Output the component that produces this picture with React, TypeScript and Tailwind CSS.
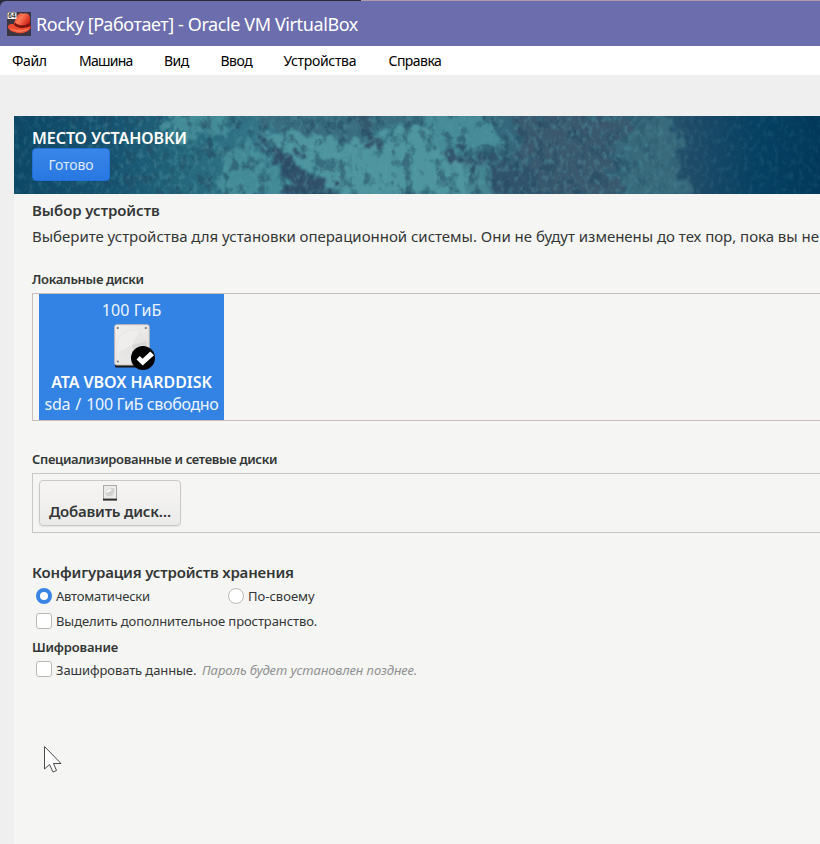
import React from "react";

const menu = [
  { label: "Файл", cls: "w-[67px] tracking-[-0.4px]" },
  { label: "Машина", cls: "w-[85px] tracking-[-0.75px]" },
  { label: "Вид", cls: "w-[56.5px] tracking-[-0.5px]" },
  { label: "Ввод", cls: "w-[63px] tracking-[-0.5px]" },
  { label: "Устройства", cls: "w-[105px] tracking-[-0.32px]" },
  { label: "Справка", cls: "tracking-[-0.55px]" },
];

function AppIcon() {
  return (
    <svg width="24" height="24" viewBox="0 0 24 24" className="shrink-0">
      <defs>
        <linearGradient id="hat" x1="0" y1="0" x2="1" y2="0.6">
          <stop offset="0" stopColor="#e02a20" />
          <stop offset="0.45" stopColor="#ff7a55" />
          <stop offset="1" stopColor="#c9160f" />
        </linearGradient>
      </defs>
      <rect width="24" height="24" fill="#3b3540" />
      <path d="M6 14C8.500 9 9 2.500 13 1.500C15 1 16 2 18 1.500C21 1 22.800 3 23 6C23.300 9 22.500 12 23.500 14.500V17H8Z" fill="url(#hat)" />
      <path d="M8 10.500C11 14 18 14.500 23 10.500L23.300 14C17 17.500 10 16.500 6.500 13.500Z" fill="#7c1410" />
      <path d="M1 14.500C1.500 12 5 11.500 7 12.500C8.500 16 17 17.500 23.500 14C24 19 17 22 10.500 21C5 20 1 18 1 14.500Z" fill="#f04a30" />
      <path d="M2 15.500C6 18.500 14 19.500 22 16.500C19 19.500 13 20.200 9 19.200C5.500 18.500 3 17.500 2 15.500Z" fill="#ff8a66" />
      <rect x="0.500" y="0.500" width="9" height="6.500" fill="#f5f5f5" />
      <text x="1.300" y="6.100" fontSize="6.500" fontWeight="700" fontFamily="Liberation Sans, sans-serif" fill="#333">64</text>
    </svg>
  );
}

function BannerTexture() {
  return (
    <svg width="806" height="78" viewBox="0 0 806 78" className="absolute inset-0" preserveAspectRatio="none">
      <defs>
        <linearGradient id="sea" x1="0" y1="0" x2="1" y2="0">
          <stop offset="0" stopColor="#0c4766" />
          <stop offset="0.120" stopColor="#155270" />
          <stop offset="0.200" stopColor="#23657b" />
          <stop offset="0.320" stopColor="#37778a" />
          <stop offset="0.520" stopColor="#387383" />
          <stop offset="0.640" stopColor="#35647a" />
          <stop offset="0.780" stopColor="#305e74" />
          <stop offset="0.840" stopColor="#1f4b68" />
          <stop offset="0.920" stopColor="#064062" />
          <stop offset="1" stopColor="#02395b" />
        </linearGradient>
        <linearGradient id="fade" x1="0" y1="0" x2="1" y2="0">
          <stop offset="0" stopColor="#fff" stopOpacity="0.250" />
          <stop offset="0.200" stopColor="#fff" stopOpacity="0.800" />
          <stop offset="0.740" stopColor="#fff" stopOpacity="0.800" />
          <stop offset="0.850" stopColor="#fff" stopOpacity="0.150" />
          <stop offset="1" stopColor="#fff" stopOpacity="0" />
        </linearGradient>
        <mask id="mid"><rect width="806" height="78" fill="url(#fade)" /></mask>
        <filter id="rough" x="-10%" y="-30%" width="120%" height="160%" colorInterpolationFilters="sRGB">
          <feTurbulence type="fractalNoise" baseFrequency="0.090" numOctaves="5" seed="8" result="n" />
          <feDisplacementMap in="SourceGraphic" in2="n" scale="36" xChannelSelector="R" yChannelSelector="G" />
          <feGaussianBlur stdDeviation="1" />
        </filter>
        <filter id="dark" x="0" y="0" width="100%" height="100%" colorInterpolationFilters="sRGB">
          <feTurbulence type="fractalNoise" baseFrequency="0.090 0.070" numOctaves="6" seed="23" />
          <feColorMatrix values="0 0 0 0 0.140  0 0 0 0 0.290  0 0 0 0 0.380  5 0 0 0 -2.500" />
        </filter>
        <filter id="light" x="0" y="0" width="100%" height="100%" colorInterpolationFilters="sRGB">
          <feTurbulence type="fractalNoise" baseFrequency="0.200 0.140" numOctaves="4" seed="4" />
          <feColorMatrix values="0 0 0 0 0.340  0 0 0 0 0.620  0 0 0 0 0.660  0 3 0 0 -1.400" />
        </filter>
      </defs>
      <rect width="806" height="78" fill="url(#sea)" />
      <g filter="url(#rough)">
        <path d="M155 -8H225L210 20L188 12L170 32L150 10Z" fill="#438b97" />
        <path d="M200 80L210 35L235 22L250 40L285 80Z" fill="#438b97" />
        <path d="M245 22L290 12L370 22L400 5L425 28L480 80H325L298 52Z" fill="#4e959f" />
        <path d="M230 -8H410L370 15L330 30L300 14L262 14Z" fill="#396d7f" />
        <path d="M243 23L275 38L300 60L325 66L322 85H255L282 72L262 45Z" fill="#31506a" />
        <path d="M340 -8H356L368 35L358 34Z" fill="#34576d" />
        <path d="M405 -8H470L492 30L455 38L420 26Z" fill="#468b97" />
        <path d="M430 36L500 45L530 65L560 82H480L475 56L432 44Z" fill="#31526b" />
        <path d="M445 48L468 46L480 80H458Z" fill="#458491" />
        <path d="M500 -5H560L620 5L595 35L605 85H540L505 40Z" fill="#3a596f" />
        <path d="M605 20L640 -8L670 25L660 55L690 85H610Z" fill="#386a7c" />
      </g>
      <g mask="url(#mid)">
        <rect width="806" height="78" filter="url(#dark)" opacity="0.650" />
        <rect width="806" height="78" filter="url(#light)" opacity="0.350" />
      </g>
      <rect width="806" height="78" filter="url(#light)" opacity="0.120" />
    </svg>
  );
}

function DiskIcon() {
  return (
    <svg width="42" height="47" viewBox="0 0 42 47" className="block">
      <defs>
        <linearGradient id="plate" x1="0" y1="0" x2="1" y2="1">
          <stop offset="0" stopColor="#f1f0ef" />
          <stop offset="1" stopColor="#e2e1e0" />
        </linearGradient>
      </defs>
      <path d="M1 37H35V42Q35 43.500 33.500 43.500H2.500Q1 43.500 1 42Z" fill="#161616" />
      <rect x="0.700" y="0.700" width="34.500" height="40.300" rx="2" fill="url(#plate)" stroke="#c9bdb8" />
      <circle cx="18" cy="21" r="15" fill="#e6e5e4" />
      <path d="M5 28A15 15 0 0 1 25 8L18 21Z" fill="#efeeed" />
      <path d="M18 21L32 17A15 15 0 0 1 24 35Z" fill="#d8d7d6" />
      <g fill="#77706d">
        <circle cx="3.800" cy="4" r="1.100" />
        <circle cx="31.800" cy="4" r="1.100" />
        <circle cx="3.800" cy="37.500" r="1.100" />
      </g>
      <circle cx="29" cy="34" r="12" fill="#000" />
      <path d="M22.500 35.500L25.800 32L28.500 34.700L36.300 27.500L40 31.200L28.700 41.500Z" fill="#fff" />
    </svg>
  );
}

function SmallDisk() {
  return (
    <svg width="14" height="16" viewBox="0 0 14 16" className="block">
      <rect x="0.500" y="0.500" width="13" height="14" fill="#ececeb" stroke="#aaa9a8" />
      <path d="M2.500 9Q2 4 6.500 3.500L11 3Q12 9 8 11Q4 12.500 2.500 9Z" fill="#d2d2d1" />
      <path d="M3 8Q3 4.500 7 4L9 5.500Z" fill="#fafafa" />
      <rect y="13.600" width="14" height="2" fill="#2d2d2d" />
    </svg>
  );
}

function Radio({ on }: { on?: boolean }) {
  return on ? (
    <span className="flex size-4 shrink-0 items-center justify-center rounded-full bg-[#3a84e6]">
      <span className="size-2 rounded-full bg-white" />
    </span>
  ) : (
    <span className="size-4 shrink-0 rounded-full border border-[#bfbbb8] bg-white" />
  );
}

function Check() {
  return <span className="size-4 shrink-0 rounded-[3px] border border-[#bdb8b4] bg-white" />;
}

export default function App() {
  return (
    <div className="relative flex h-[844px] w-[820px] flex-col overflow-hidden bg-[#efefef] font-['Noto_Sans',sans-serif] text-[#333735]">
      <div className="flex h-[46px] shrink-0 flex-col bg-[#2a2939]">
        <div className="flex h-px shrink-0 justify-end">
          <div className="w-[459px] bg-[#b39aae]" />
        </div>
        <div className="flex h-[45px] items-center rounded-tl-[6px] bg-[#6b6dad] pl-[7px]">
          <AppIcon />
          <span className="ml-[5px] text-[18px] leading-[26px] tracking-[-0.4px] whitespace-pre text-white">Rocky [Работает] - Oracle VM VirtualBox</span>
        </div>
      </div>
      <div className="flex h-[29px] shrink-0 bg-white pl-3 text-[14px] leading-[30px] text-black">
        {menu.map((m) => (
          <span key={m.label} className={"shrink-0 " + m.cls}>{m.label}</span>
        ))}
      </div>
      <div className="ml-[14px] mt-[41px] flex min-h-0 flex-1 flex-col bg-[#f5f5f4]">
        <div className="relative h-[78px] shrink-0 overflow-hidden">
          <BannerTexture />
          <div className="relative flex flex-col items-start pl-[18px] pt-3">
            <span className="text-[16px] leading-5 font-semibold tracking-[-0.07px] text-white">МЕСТО УСТАНОВКИ</span>
            <span className="flex h-[33px] w-[78px] items-center justify-center rounded-[4px] border border-[#2171d8] bg-linear-to-b from-[#3986e8] to-[#2877e2] text-[14px] tracking-[-0.1px] text-[#dfeafb]">Готово</span>
          </div>
        </div>
        <div className="flex flex-col pl-[18px]">
          <div className="mt-[6px] text-[15px] leading-5 font-semibold tracking-[-0.07px]">Выбор устройств</div>
          <div className="mt-[6px] text-[15px] leading-5 tracking-[-0.02px] whitespace-pre">Выберите устройства для установки операционной системы. Они не будут изменены до тех пор, пока вы не</div>
          <div className="mt-[23px] text-[13px] leading-5 font-semibold tracking-[-0.33px]">Локальные диски</div>
          <div className="mt-[4px] flex h-[128px] border border-r-0 border-[#c9bfba] pl-[6px]">
            <div className="flex w-[185px] flex-col items-center bg-[#3283e4] text-[16px] leading-5 whitespace-pre text-[#eef5ff]">
              <span className="mt-[6px] tracking-[0.1px]">100 ГиБ</span>
              <div className="mt-[4px] ml-[6px] h-[47px]"><DiskIcon /></div>
              <span className="mt-[1px] font-semibold tracking-[-0.06px] text-white">ATA VBOX HARDDISK</span>
              <span className="mt-[2px] tracking-[-0.34px]">sda <span className="mx-[1.5px]">/</span> 100 ГиБ свободно</span>
            </div>
          </div>
          <div className="mt-[28px] text-[13px] leading-5 font-semibold tracking-[-0.35px]">Специализированные и сетевые диски</div>
          <div className="mt-[4px] flex h-[60px] border border-r-0 border-[#c9c7c4] pt-[6px] pl-[6px]">
            <div className="flex h-[46px] w-[142px] flex-col items-center rounded-[4px] border border-[#cbc7c3] bg-linear-to-b from-[#f6f5f4] to-[#ebebea] pt-1 shadow-[0_1px_2px_rgba(0,0,0,0.07)]">
              <SmallDisk />
              <span className="text-[15px] leading-5 font-semibold tracking-[-0.2px]">Добавить диск…</span>
            </div>
          </div>
          <div className="mt-[29px] text-[15px] leading-5 font-semibold tracking-[-0.17px]">Конфигурация устройств хранения</div>
          <div className="mt-[4px] ml-1 flex h-5 items-center text-[13px] leading-5">
            <div className="flex w-[192px] items-center gap-1">
              <Radio on />
              <span className="tracking-[-0.2px]">Автоматически</span>
            </div>
            <div className="flex items-center gap-1">
              <Radio />
              <span>По-своему</span>
            </div>
          </div>
          <div className="mt-[5px] ml-1 flex h-5 items-center gap-1 text-[13px] leading-5">
            <Check />
            <span className="tracking-[-0.09px]">Выделить дополнительное пространство.</span>
          </div>
          <div className="mt-[6px] text-[13px] leading-5 font-semibold tracking-[-0.18px]">Шифрование</div>
          <div className="mt-[2px] ml-1 flex h-5 items-center gap-1 text-[13px] leading-5">
            <Check />
            <span className="w-[142px] pt-[2px] tracking-[-0.1px] whitespace-pre">Зашифровать данные.</span>
            <span className="pt-[2px] tracking-[-0.04px] whitespace-pre text-[#8f9190] italic">Пароль будет установлен позднее.</span>
          </div>
        </div>
      </div>
      <svg width="20" height="29" viewBox="0 0 20 29" className="absolute left-[43px] top-[745px]">
        <path d="M1.500 1.500V24L6.500 19.500L10 27L13.500 25.500L10.500 18.500H18Z" fill="#fff" stroke="#4a4a4a" strokeWidth="1" />
      </svg>
    </div>
  );
}
